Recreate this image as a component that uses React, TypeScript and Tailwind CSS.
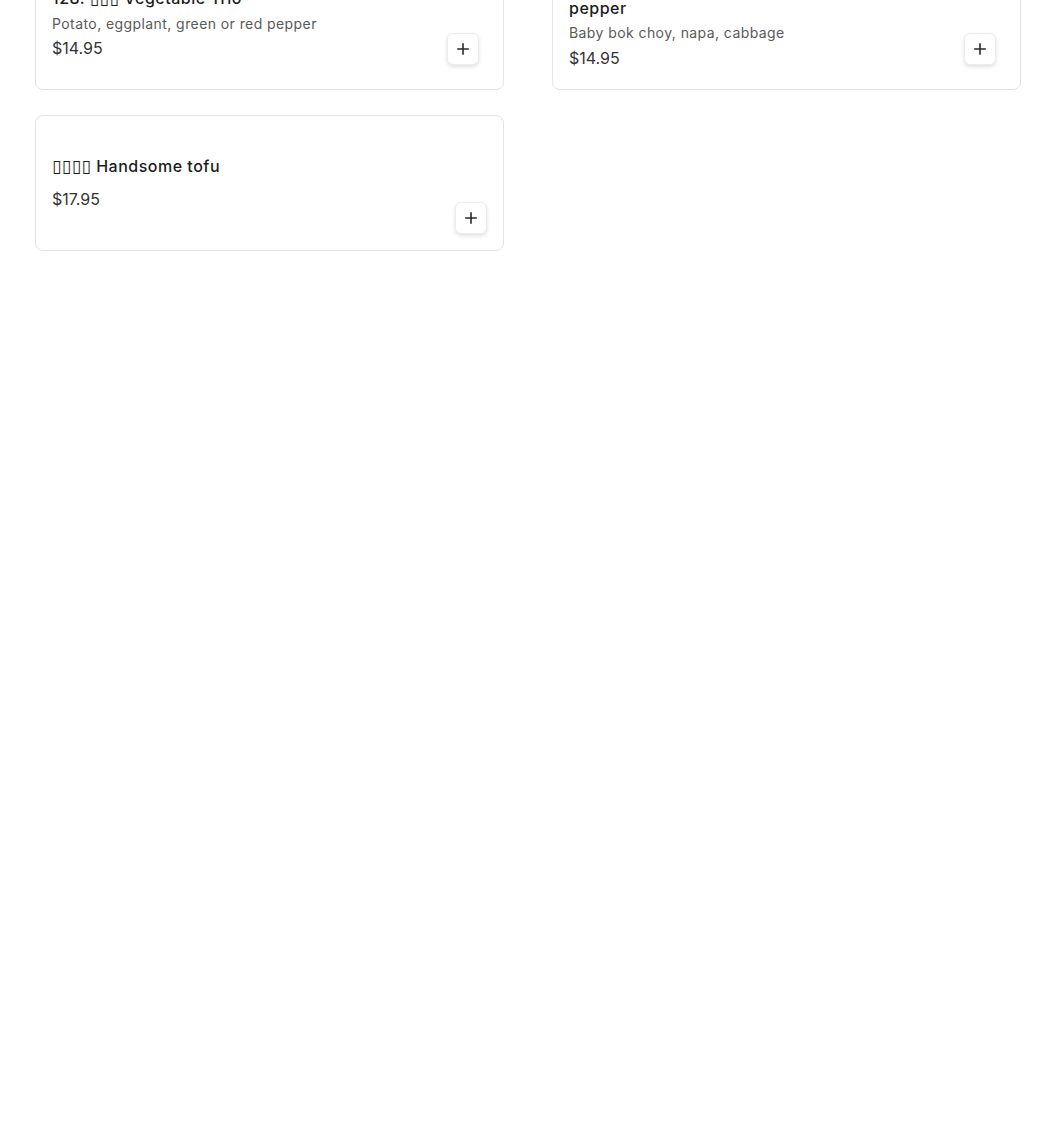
import React from "react";

const font = { fontFamily: "Inter, 'Noto Sans', sans-serif" };

function Tofu({ n }: { n: number }) {
  return (
    <span className="font-['DejaVu_Sans',sans-serif] font-normal leading-none text-[17px]">
      {"▯".repeat(n)}
    </span>
  );
}

function PlusButton({ pos }: { pos: string }) {
  return (
    <button
      className={
        "absolute flex h-8 w-8 items-center justify-center rounded-md border border-[#ececec] bg-white shadow-[0_2px_4px_rgba(0,0,0,0.12)] " +
        pos
      }
    >
      <svg width="12" height="12" viewBox="0 0 12 12">
        <path d="M6 1v10M1 6h10" stroke="#2a2a2a" strokeWidth="1.6" strokeLinecap="square" />
      </svg>
    </button>
  );
}

export default function App() {
  return (
    <div className="min-h-[1139px] w-full bg-white" style={font}>
      <div className="-mt-[46px] ml-[35px] grid grid-cols-[469px_469px] gap-x-[48px] gap-y-[25px]">
        <div className="relative flex h-[136px] items-center rounded-lg border border-[#e3e3e3] bg-white pl-4 pr-4">
          <div className="flex flex-col pt-[2px]">
            <div className="text-[16px] font-medium leading-6 tracking-[0.5px] text-[#1c1c1c]">
              128. <Tofu n={3} /> Vegetable Trio
            </div>
            <div className="mt-[4px] text-[14px] leading-5 tracking-[0.42px] text-[#5a5a5a]">
              Potato, eggplant, green or red pepper
            </div>
            <div className="mt-[2px] text-[16px] leading-6 text-[#333333]">$14.95</div>
          </div>
          <PlusButton pos="bottom-6 right-6" />
        </div>

        <div className="relative flex h-[136px] items-center rounded-lg border border-[#e3e3e3] bg-white pl-4 pr-4">
          <div className="flex flex-col pb-[2px]">
            <div className="text-[16px] font-medium leading-6 tracking-[0.5px] text-[#1c1c1c]">
              129. <Tofu n={4} /> Mixed greens with chili
              <br />
              pepper
            </div>
            <div className="mt-[3px] text-[14px] leading-5 tracking-[0.42px] text-[#5a5a5a]">
              Baby bok choy, napa, cabbage
            </div>
            <div className="mt-[3px] text-[16px] leading-6 text-[#333333]">$14.95</div>
          </div>
          <PlusButton pos="bottom-6 right-6" />
        </div>

        <div className="relative flex h-[136px] items-center rounded-lg border border-[#e3e3e3] bg-white pl-4 pr-4">
          <div className="flex flex-col pb-[1px]">
            <div className="text-[16px] font-medium leading-6 tracking-[0.5px] text-[#1c1c1c]">
              <Tofu n={4} /> Handsome tofu
            </div>
            <div className="mt-[9px] text-[16px] leading-6 text-[#333333]">$17.95</div>
          </div>
          <PlusButton pos="bottom-4 right-4" />
        </div>
      </div>
    </div>
  );
}
